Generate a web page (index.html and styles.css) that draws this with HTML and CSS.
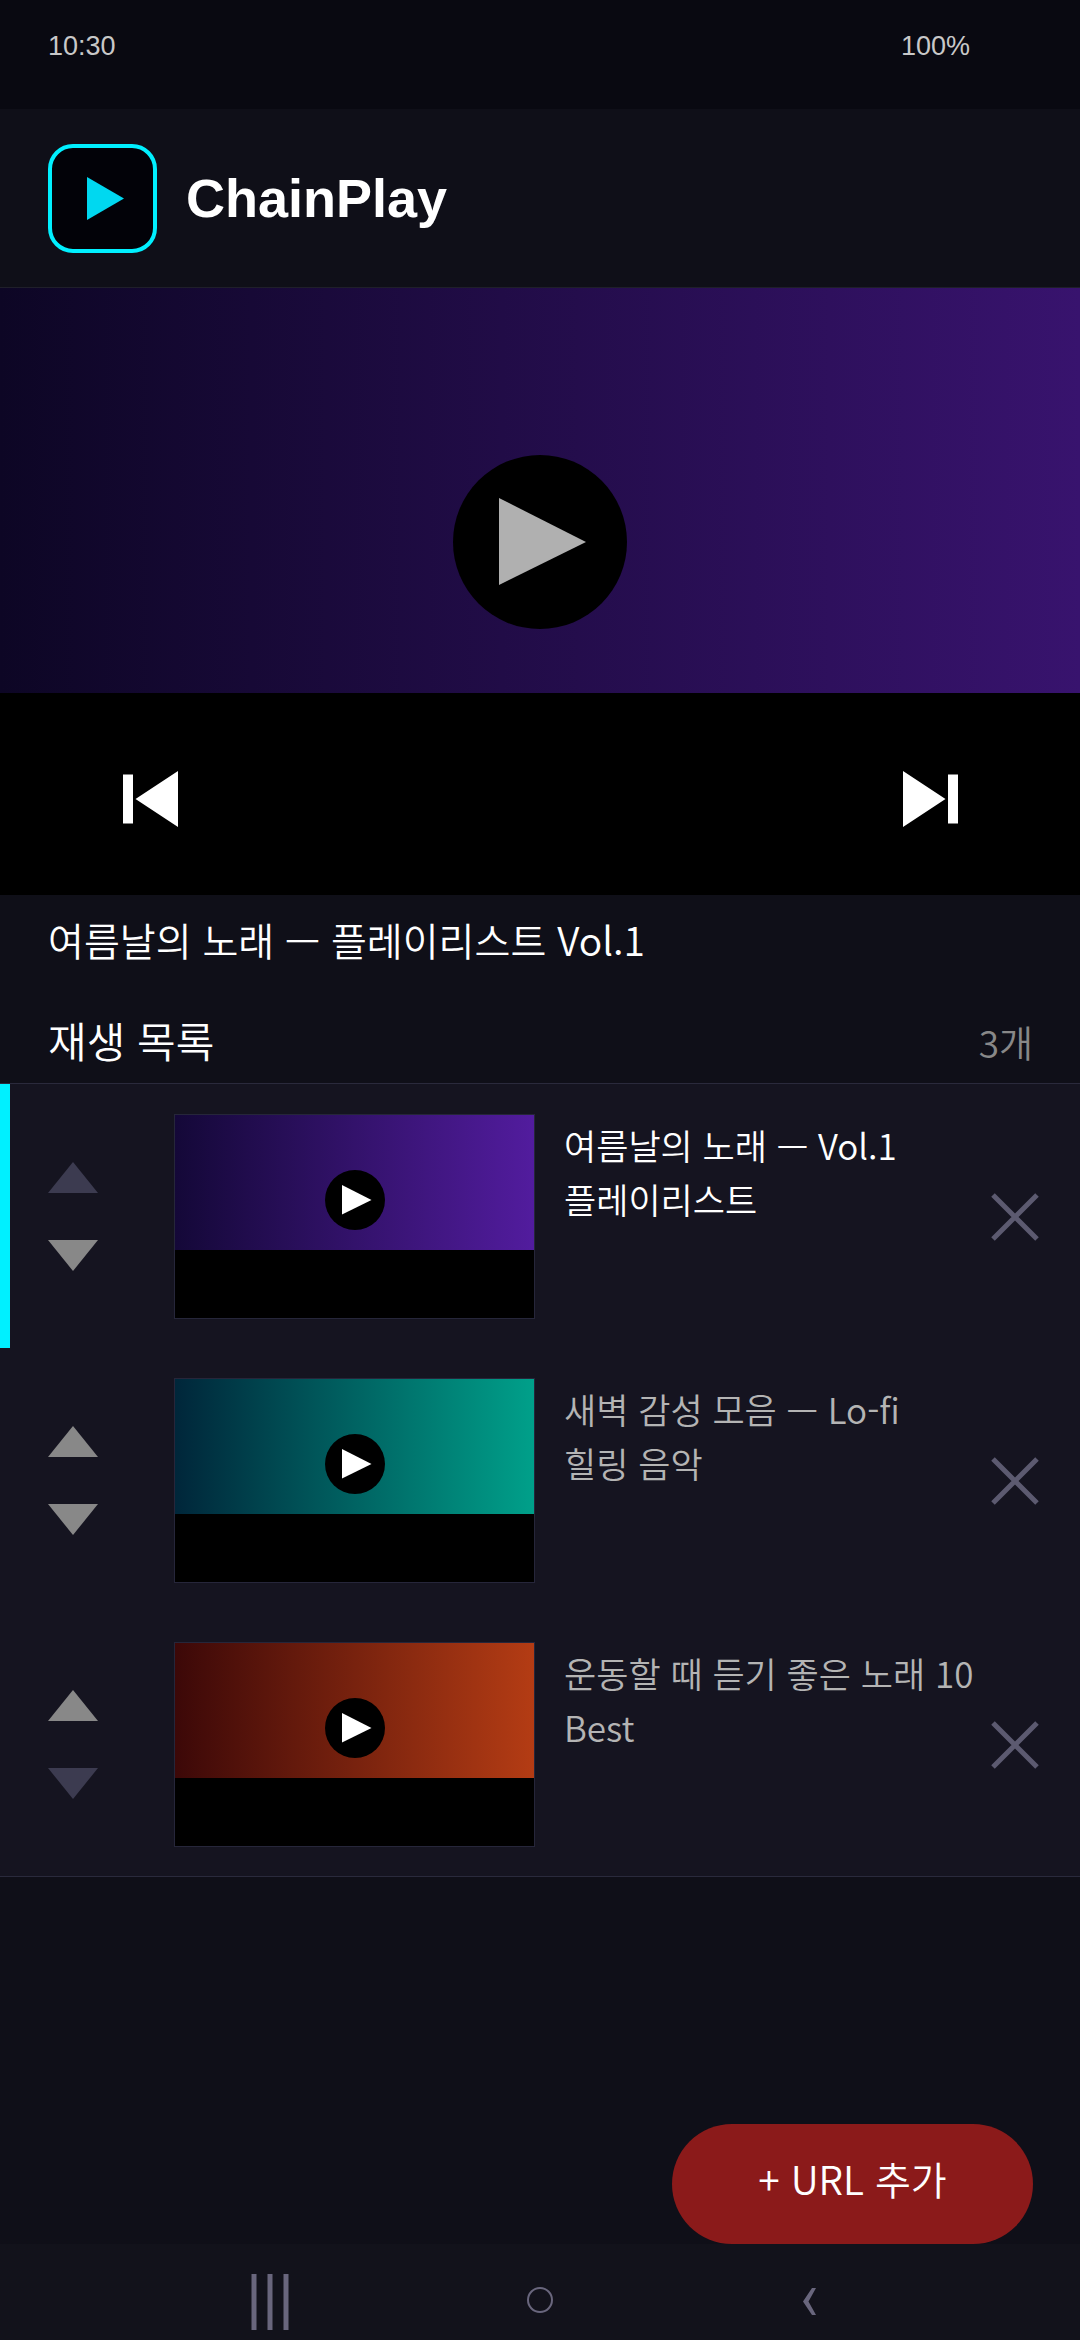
FILE: index.html
```html
<!DOCTYPE html>
<html lang="ko">
<head>
<meta charset="utf-8">
<meta name="viewport" content="width=device-width, initial-scale=1">
<title>ChainPlay</title>
<link rel="stylesheet" href="styles.css">
</head>
<body>
<div class="status-bar"><span>10:30</span><span>100%</span></div>

<header class="app-header">
  <svg class="logo" viewBox="0 0 109 109" aria-hidden="true">
    <rect x="2" y="2" width="105" height="105" rx="23" fill="#020208" stroke="#00f0ff" stroke-width="4"/>
    <path d="M39 33L76 54.500L39 76Z" fill="#00d8f0"/>
  </svg>
  <h1 class="app-name">ChainPlay</h1>
</header>

<main class="content">
  <section class="player" aria-label="플레이어">
    <div class="player-art"></div>
    <div class="player-controls">
      <button class="skip" type="button" aria-label="이전">
        <svg class="skip-icon" viewBox="0 0 56 56"><path d="M0 3.500H10V52.500H0ZM55 0V56L12.500 28Z" fill="#fff"/></svg>
      </button>
      <button class="skip" type="button" aria-label="다음">
        <svg class="skip-icon" viewBox="0 0 56 56"><path d="M46 3.500H56V52.500H46ZM1 0V56L43.500 28Z" fill="#fff"/></svg>
      </button>
    </div>
    <button class="play-large" type="button" aria-label="재생">
      <svg viewBox="0 0 174 174"><circle cx="87" cy="87" r="87"/><path d="M46 43L133 87L46 130Z" fill="#b0b0b0"/></svg>
    </button>
  </section>

  <p class="now-playing">여름날의 노래 — 플레이리스트 Vol.1</p>

  <section>
    <div class="list-header">
      <h2 class="list-title">재생 목록</h2>
      <span class="list-count">3개</span>
    </div>
    <ul class="playlist">
      <li class="track track-current">
        <div class="reorder">
          <button class="move" type="button" aria-label="위로" disabled><svg class="move-icon" viewBox="0 0 50 31"><path d="M25 0L50 31H0Z"/></svg></button>
          <button class="move" type="button" aria-label="아래로"><svg class="move-icon" viewBox="0 0 50 31"><path d="M0 0H50L25 31Z"/></svg></button>
        </div>
        <div class="thumb">
          <div class="thumb-art art-violet"></div>
          <svg class="thumb-play" viewBox="0 0 60 60"><circle cx="30" cy="30" r="30"/><path d="M17 15L46.500 30L17 44.500Z" fill="#fff"/></svg>
        </div>
        <p class="track-title">여름날의 노래 — Vol.1 플레이리스트</p>
        <button class="remove" type="button" aria-label="삭제"><svg class="remove-icon" viewBox="0 0 48 48"><path d="M2 2L46 46M46 2L2 46"/></svg></button>
      </li>
      <li class="track">
        <div class="reorder">
          <button class="move" type="button" aria-label="위로"><svg class="move-icon" viewBox="0 0 50 31"><path d="M25 0L50 31H0Z"/></svg></button>
          <button class="move" type="button" aria-label="아래로"><svg class="move-icon" viewBox="0 0 50 31"><path d="M0 0H50L25 31Z"/></svg></button>
        </div>
        <div class="thumb">
          <div class="thumb-art art-teal"></div>
          <svg class="thumb-play" viewBox="0 0 60 60"><circle cx="30" cy="30" r="30"/><path d="M17 15L46.500 30L17 44.500Z" fill="#fff"/></svg>
        </div>
        <p class="track-title">새벽 감성 모음 — Lo-fi<br>힐링 음악</p>
        <button class="remove" type="button" aria-label="삭제"><svg class="remove-icon" viewBox="0 0 48 48"><path d="M2 2L46 46M46 2L2 46"/></svg></button>
      </li>
      <li class="track">
        <div class="reorder">
          <button class="move" type="button" aria-label="위로"><svg class="move-icon" viewBox="0 0 50 31"><path d="M25 0L50 31H0Z"/></svg></button>
          <button class="move" type="button" aria-label="아래로" disabled><svg class="move-icon" viewBox="0 0 50 31"><path d="M0 0H50L25 31Z"/></svg></button>
        </div>
        <div class="thumb">
          <div class="thumb-art art-orange"></div>
          <svg class="thumb-play" viewBox="0 0 60 60"><circle cx="30" cy="30" r="30"/><path d="M17 15L46.500 30L17 44.500Z" fill="#fff"/></svg>
        </div>
        <p class="track-title">운동할 때 듣기 좋은 노래 10 Best</p>
        <button class="remove" type="button" aria-label="삭제"><svg class="remove-icon" viewBox="0 0 48 48"><path d="M2 2L46 46M46 2L2 46"/></svg></button>
      </li>
    </ul>
  </section>

  <button class="add-url" type="button">+ URL 추가</button>
</main>

<nav class="system-nav" aria-label="시스템">
  <button class="nav-button" type="button" aria-label="최근 앱"><svg class="nav-icon" viewBox="0 0 56 56"><path d="M9.500 0H14.500V56H9.500ZM25.500 0H30.500V56H25.500ZM41.500 0H46.500V56H41.500Z" fill="#69667d"/></svg></button>
  <button class="nav-button" type="button" aria-label="홈"><svg class="nav-icon" viewBox="0 0 56 56"><circle cx="28" cy="26" r="12" fill="none" stroke="#69667d" stroke-width="2"/></svg></button>
  <button class="nav-button" type="button" aria-label="뒤로"><svg class="nav-icon" viewBox="0 0 56 56"><path d="M30 14H34L26.500 27.500L34 41H30L21 27.500Z" fill="#69667d"/></svg></button>
</nav>
</body>
</html>
```
FILE: styles.css
```css
* {
  box-sizing: border-box;
}

body {
  margin: 0;
  min-height: 100vh;
  display: flex;
  flex-direction: column;
  background: #0f0f18;
  color: #fff;
  font-family: "Noto Sans CJK KR", sans-serif;
  font-weight: 350;
}

h1, h2, p, ul {
  margin: 0;
  padding: 0;
  font-weight: inherit;
}

button {
  border: 0;
  padding: 0;
  background: none;
  color: inherit;
  font: inherit;
}

svg {
  display: block;
}

.status-bar {
  display: flex;
  justify-content: space-between;
  height: 109px;
  padding: 30px 110px 0 48px;
  background: #090911;
  color: #c8c8c8;
  font-family: "Liberation Sans", sans-serif;
  font-size: 27px;
  font-weight: 400;
  line-height: 32px;
}

.app-header {
  display: flex;
  align-items: center;
  gap: 29px;
  height: 179px;
  padding: 0 48px;
  border-bottom: 1px solid #1f1f2a;
}

.logo {
  width: 109px;
  height: 109px;
}

.app-name {
  font-family: "Liberation Sans", sans-serif;
  font-size: 54px;
  font-weight: 700;
  line-height: 62px;
}

.content {
  flex: 1;
  display: flex;
  flex-direction: column;
}

.player {
  position: relative;
  display: grid;
  grid-template-rows: 2fr 1fr;
  aspect-ratio: 1080 / 607;
  background: #000;
}

.player-art {
  background: linear-gradient(90deg, #0d0625, #38136e);
}

.player-controls {
  display: flex;
  justify-content: space-between;
  align-items: center;
  padding: 10px 95px 0 96px;
}

.skip {
  display: grid;
  place-items: center;
  width: 110px;
  height: 110px;
}

.skip-icon {
  width: 56px;
  height: 56px;
}

.play-large {
  position: absolute;
  left: 50%;
  top: 41.8%;
  width: 174px;
  height: 174px;
  margin: -87px 0 0 -87px;
}

.now-playing {
  padding: 17px 48px 31px;
  font-size: 39px;
  line-height: 54px;
}

.list-header {
  display: flex;
  align-items: baseline;
  justify-content: space-between;
  padding: 16px 47px 14px 48px;
}

.list-title {
  font-size: 42px;
  line-height: 54px;
}

.list-count {
  color: #888;
  font-size: 37px;
  line-height: 54px;
}

.playlist {
  border: solid #2a2a3c;
  border-width: 1px 0;
  background: #151420;
  list-style: none;
}

.track {
  display: flex;
  align-items: center;
  padding: 30px 35px 29px 28px;
  border-left: 10px solid transparent;
  color: #b4b4b4;
}

.track-current {
  border-left-color: #00f0ff;
  color: #fff;
}

.reorder {
  display: grid;
  gap: 30px;
  margin-right: 66px;
}

.move {
  display: grid;
  place-items: center;
  width: 70px;
  height: 48px;
  color: #888;
}

.move:disabled {
  color: #3c3b50;
}

.move-icon {
  width: 50px;
  height: 31px;
  fill: currentColor;
}

.thumb {
  position: relative;
  flex: none;
  width: 361px;
  height: 205px;
  border: 1px solid #26263a;
  background: #000;
}

.thumb-art {
  height: 135px;
}

.art-violet {
  background: linear-gradient(90deg, #140838, #521c9e);
}

.art-teal {
  background: linear-gradient(90deg, #00263a, #00a08a);
}

.art-orange {
  background: linear-gradient(90deg, #3c0808, #b43c14);
}

.thumb-play {
  position: absolute;
  left: 150px;
  top: 55px;
  width: 60px;
  height: 60px;
}

.track-title {
  flex: 1;
  align-self: flex-start;
  padding: 4px 0 0 29px;
  font-size: 35px;
  line-height: 54px;
  word-break: keep-all;
}

.remove {
  display: grid;
  place-items: center;
  width: 60px;
  height: 60px;
}

.remove-icon {
  width: 48px;
  height: 48px;
  fill: none;
  stroke: #5c5a70;
  stroke-width: 5;
}

.add-url {
  align-self: flex-end;
  width: 361px;
  height: 120px;
  margin: auto 47px 0 0;
  padding-bottom: 12px;
  border-radius: 60px;
  background: #8b1a1a;
  font-size: 39px;
}

.system-nav {
  display: grid;
  grid-template-columns: repeat(3, 1fr);
  height: 96px;
  padding: 0 12.5%;
  background: #12121b;
}

.nav-button {
  display: grid;
  place-items: center;
  padding-top: 20px;
}

.nav-icon {
  width: 56px;
  height: 56px;
}
```
